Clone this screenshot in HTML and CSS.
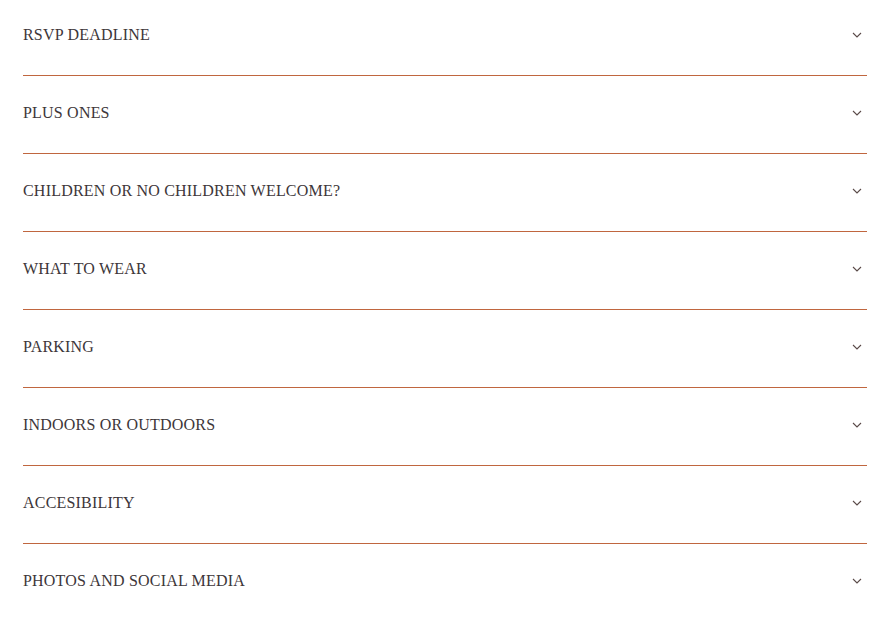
FILE: index.html
```html
<!DOCTYPE html>
<html>
<head>
<meta charset="utf-8">
<link rel="stylesheet" href="styles.css">
</head>
<body>
<div class="faq">
  <div class="item"><span class="q">RSVP DEADLINE</span><svg class="chev" viewBox="0 0 10 6" width="10" height="6"><path d="M1 1 L5 5 L9 1"/></svg></div>
  <div class="item"><span class="q">PLUS ONES</span><svg class="chev" viewBox="0 0 10 6" width="10" height="6"><path d="M1 1 L5 5 L9 1"/></svg></div>
  <div class="item"><span class="q">CHILDREN OR NO CHILDREN WELCOME?</span><svg class="chev" viewBox="0 0 10 6" width="10" height="6"><path d="M1 1 L5 5 L9 1"/></svg></div>
  <div class="item"><span class="q">WHAT TO WEAR</span><svg class="chev" viewBox="0 0 10 6" width="10" height="6"><path d="M1 1 L5 5 L9 1"/></svg></div>
  <div class="item"><span class="q">PARKING</span><svg class="chev" viewBox="0 0 10 6" width="10" height="6"><path d="M1 1 L5 5 L9 1"/></svg></div>
  <div class="item"><span class="q">INDOORS OR OUTDOORS</span><svg class="chev" viewBox="0 0 10 6" width="10" height="6"><path d="M1 1 L5 5 L9 1"/></svg></div>
  <div class="item"><span class="q">ACCESIBILITY</span><svg class="chev" viewBox="0 0 10 6" width="10" height="6"><path d="M1 1 L5 5 L9 1"/></svg></div>
  <div class="item last"><span class="q">PHOTOS AND SOCIAL MEDIA</span><svg class="chev" viewBox="0 0 10 6" width="10" height="6"><path d="M1 1 L5 5 L9 1"/></svg></div>
</div>
</body>
</html>
```
FILE: styles.css
```css
html, body { margin: 0; padding: 0; background: #fff; }
.faq {
  margin: -2px 10px 0 23px;
  display: flex;
  flex-direction: column;
}
.item {
  box-sizing: border-box;
  height: 78px;
  display: flex;
  align-items: center;
  justify-content: space-between;
  border-bottom: 1px solid #c0663f;
  padding-bottom: 3px;
}
.item.last { border-bottom: 1px solid transparent; }
.q {
  font-family: "Liberation Serif", "Times New Roman", serif;
  font-size: 16px;
  color: #3d3639;
  letter-spacing: 0.2px;
}
.chev {
  margin-right: 5px;
  fill: none;
  stroke: #5a4a48;
  stroke-width: 1.1;
}
```
